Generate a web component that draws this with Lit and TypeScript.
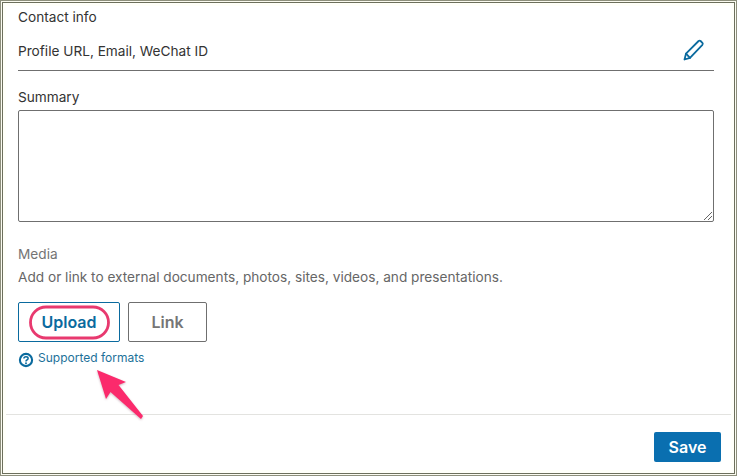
import { LitElement, html, css } from "lit";
import { customElement } from "lit/decorators.js";

@customElement("app-root")
export class AppRoot extends LitElement {
  static styles = css`
    :host {
      display: block;
      width: 737px;
      height: 476px;
      font-family: Inter, "Liberation Sans", sans-serif;
      color: #2b2b2b;
    }
    .frame {
      position: relative;
      box-sizing: border-box;
      width: 737px;
      height: 476px;
      border: 1px solid #8d8f7c;
      background: #fbfbf0;
      padding: 1px;
      overflow: hidden;
    }
    .inner {
      box-sizing: border-box;
      height: 100%;
      border: 1px solid #6c6f5c;
      background: #fffff9;
      padding: 3px;
    }
    .panel {
      box-sizing: border-box;
      height: 100%;
      background: #fff;
      display: flex;
      flex-direction: column;
    }
    .form {
      flex: 1;
      padding: 1px 17px 0 12px;
      display: flex;
      flex-direction: column;
    }
    .label {
      font-size: 13.65px;
      line-height: 20px;
      color: #333;
    }
    .contact {
      display: flex;
      align-items: center;
      justify-content: space-between;
      height: 39px;
      margin-top: 4px;
      padding-right: 9px;
      border-bottom: 1px solid #6f6f6f;
      font-size: 13.65px;
      color: #333;
    }
    .pencil {
      width: 24px;
      height: 24px;
      display: block;
      margin-top: -1px;
    }
    .summary-label {
      margin-top: 16px;
    }
    .textarea {
      position: relative;
      box-sizing: border-box;
      height: 112px;
      margin-top: 3px;
      border: 1px solid #6f6f6f;
      border-radius: 2px;
      background: #fff;
    }
    .grip {
      position: absolute;
      right: 0;
      bottom: 0;
      width: 10px;
      height: 10px;
      display: block;
    }
    .media {
      margin-top: 22px;
      font-size: 13.65px;
      line-height: 20px;
      color: #747474;
    }
    .desc {
      margin-top: 3px;
      font-size: 13.65px;
      line-height: 20px;
      color: #666;
    }
    .buttons {
      display: flex;
      gap: 8px;
      margin-top: 15px;
    }
    .btn {
      box-sizing: border-box;
      height: 40px;
      display: flex;
      align-items: center;
      justify-content: center;
      border-radius: 2px;
      font-size: 16px;
      font-weight: 600;
      background: #fff;
    }
    .upload {
      width: 102px;
      border: 1px solid #0a6a9e;
      color: #0a6a9e;
    }
    .link {
      width: 79px;
      border: 1px solid #6f6f6f;
      color: #757575;
    }
    .formats {
      display: flex;
      align-items: center;
      gap: 4px;
      margin-top: 6px;
      font-size: 12px;
      line-height: 18px;
      color: #1d7199;
    }
    .help {
      width: 16px;
      height: 16px;
      margin-top: 4px;
      display: block;
    }
    .footer {
      height: 56px;
      border-top: 1px solid #e3e3e0;
      display: flex;
      align-items: flex-start;
      justify-content: flex-end;
      padding: 17px 10px 0 0;
      box-sizing: border-box;
    }
    .save {
      box-sizing: border-box;
      width: 67px;
      height: 30px;
      display: flex;
      align-items: center;
      justify-content: center;
      background: #0a6fb0;
      color: #fff;
      border-radius: 2px;
      font-size: 16px;
      font-weight: 600;
    }
    .annot {
      position: absolute;
      left: -1px;
      top: -1px;
      width: 737px;
      height: 476px;
      pointer-events: none;
    }
    .arrow {
      filter: drop-shadow(0 1px 1px rgba(120, 40, 70, 0.35));
    }
  `;

  render() {
    return html`
      <div class="frame">
        <div class="inner">
          <div class="panel">
            <div class="form">
              <div class="label">Contact info</div>
              <div class="contact">
                <span>Profile URL, Email, WeChat ID</span>
                <svg class="pencil" viewBox="0 0 24 24" fill="none" stroke="#0a6a9e" stroke-width="1.8" stroke-linejoin="round" stroke-linecap="round">
                  <path d="M3.5 21.5 L5 15.6 L17.6 3 Q18.6 2.2 19.6 3 L21.4 4.8 Q22.2 5.8 21.4 6.8 L9 19.8 Z" />
                  <path d="M5 15.6 L9 19.8" />
                </svg>
              </div>
              <div class="label summary-label">Summary</div>
              <div class="textarea">
                <svg class="grip" viewBox="0 0 10 10" stroke="#666" stroke-width="1" fill="none">
                  <path d="M1 9 L9 1 M5 9 L9 5" />
                </svg>
              </div>
              <div class="media">Media</div>
              <div class="desc">Add or link to external documents, photos, sites, videos, and presentations.</div>
              <div class="buttons">
                <div class="btn upload">Upload</div>
                <div class="btn link">Link</div>
              </div>
              <div class="formats">
                <svg class="help" viewBox="0 0 16 16" fill="none" stroke="#0a6a9e">
                  <circle cx="8" cy="8" r="6.1" stroke-width="2.1" />
                  <path d="M5.9 6.6 Q5.9 4.8 8 4.8 Q10.1 4.8 10.1 6.4 Q10.1 7.5 8.9 8 Q8 8.4 8 9.4" stroke-width="1.5" />
                  <circle cx="8" cy="11.3" r="0.95" fill="#0a6a9e" stroke="none" />
                </svg>
                <span>Supported formats</span>
              </div>
            </div>
            <div class="footer">
              <div class="save">Save</div>
            </div>
          </div>
        </div>
        <svg class="annot" viewBox="0 0 737 476">
          <rect x="30.5" y="307" width="78" height="31" rx="15.5" fill="none" stroke="#e8396f" stroke-width="2.8" />
          <path class="arrow" d="M97 370 L126 382 L118.5 385 L143 416 L141 419 L110.5 392 L106 399 Z" fill="#fb2a6c" />
        </svg>
      </div>
    `;
  }
}
